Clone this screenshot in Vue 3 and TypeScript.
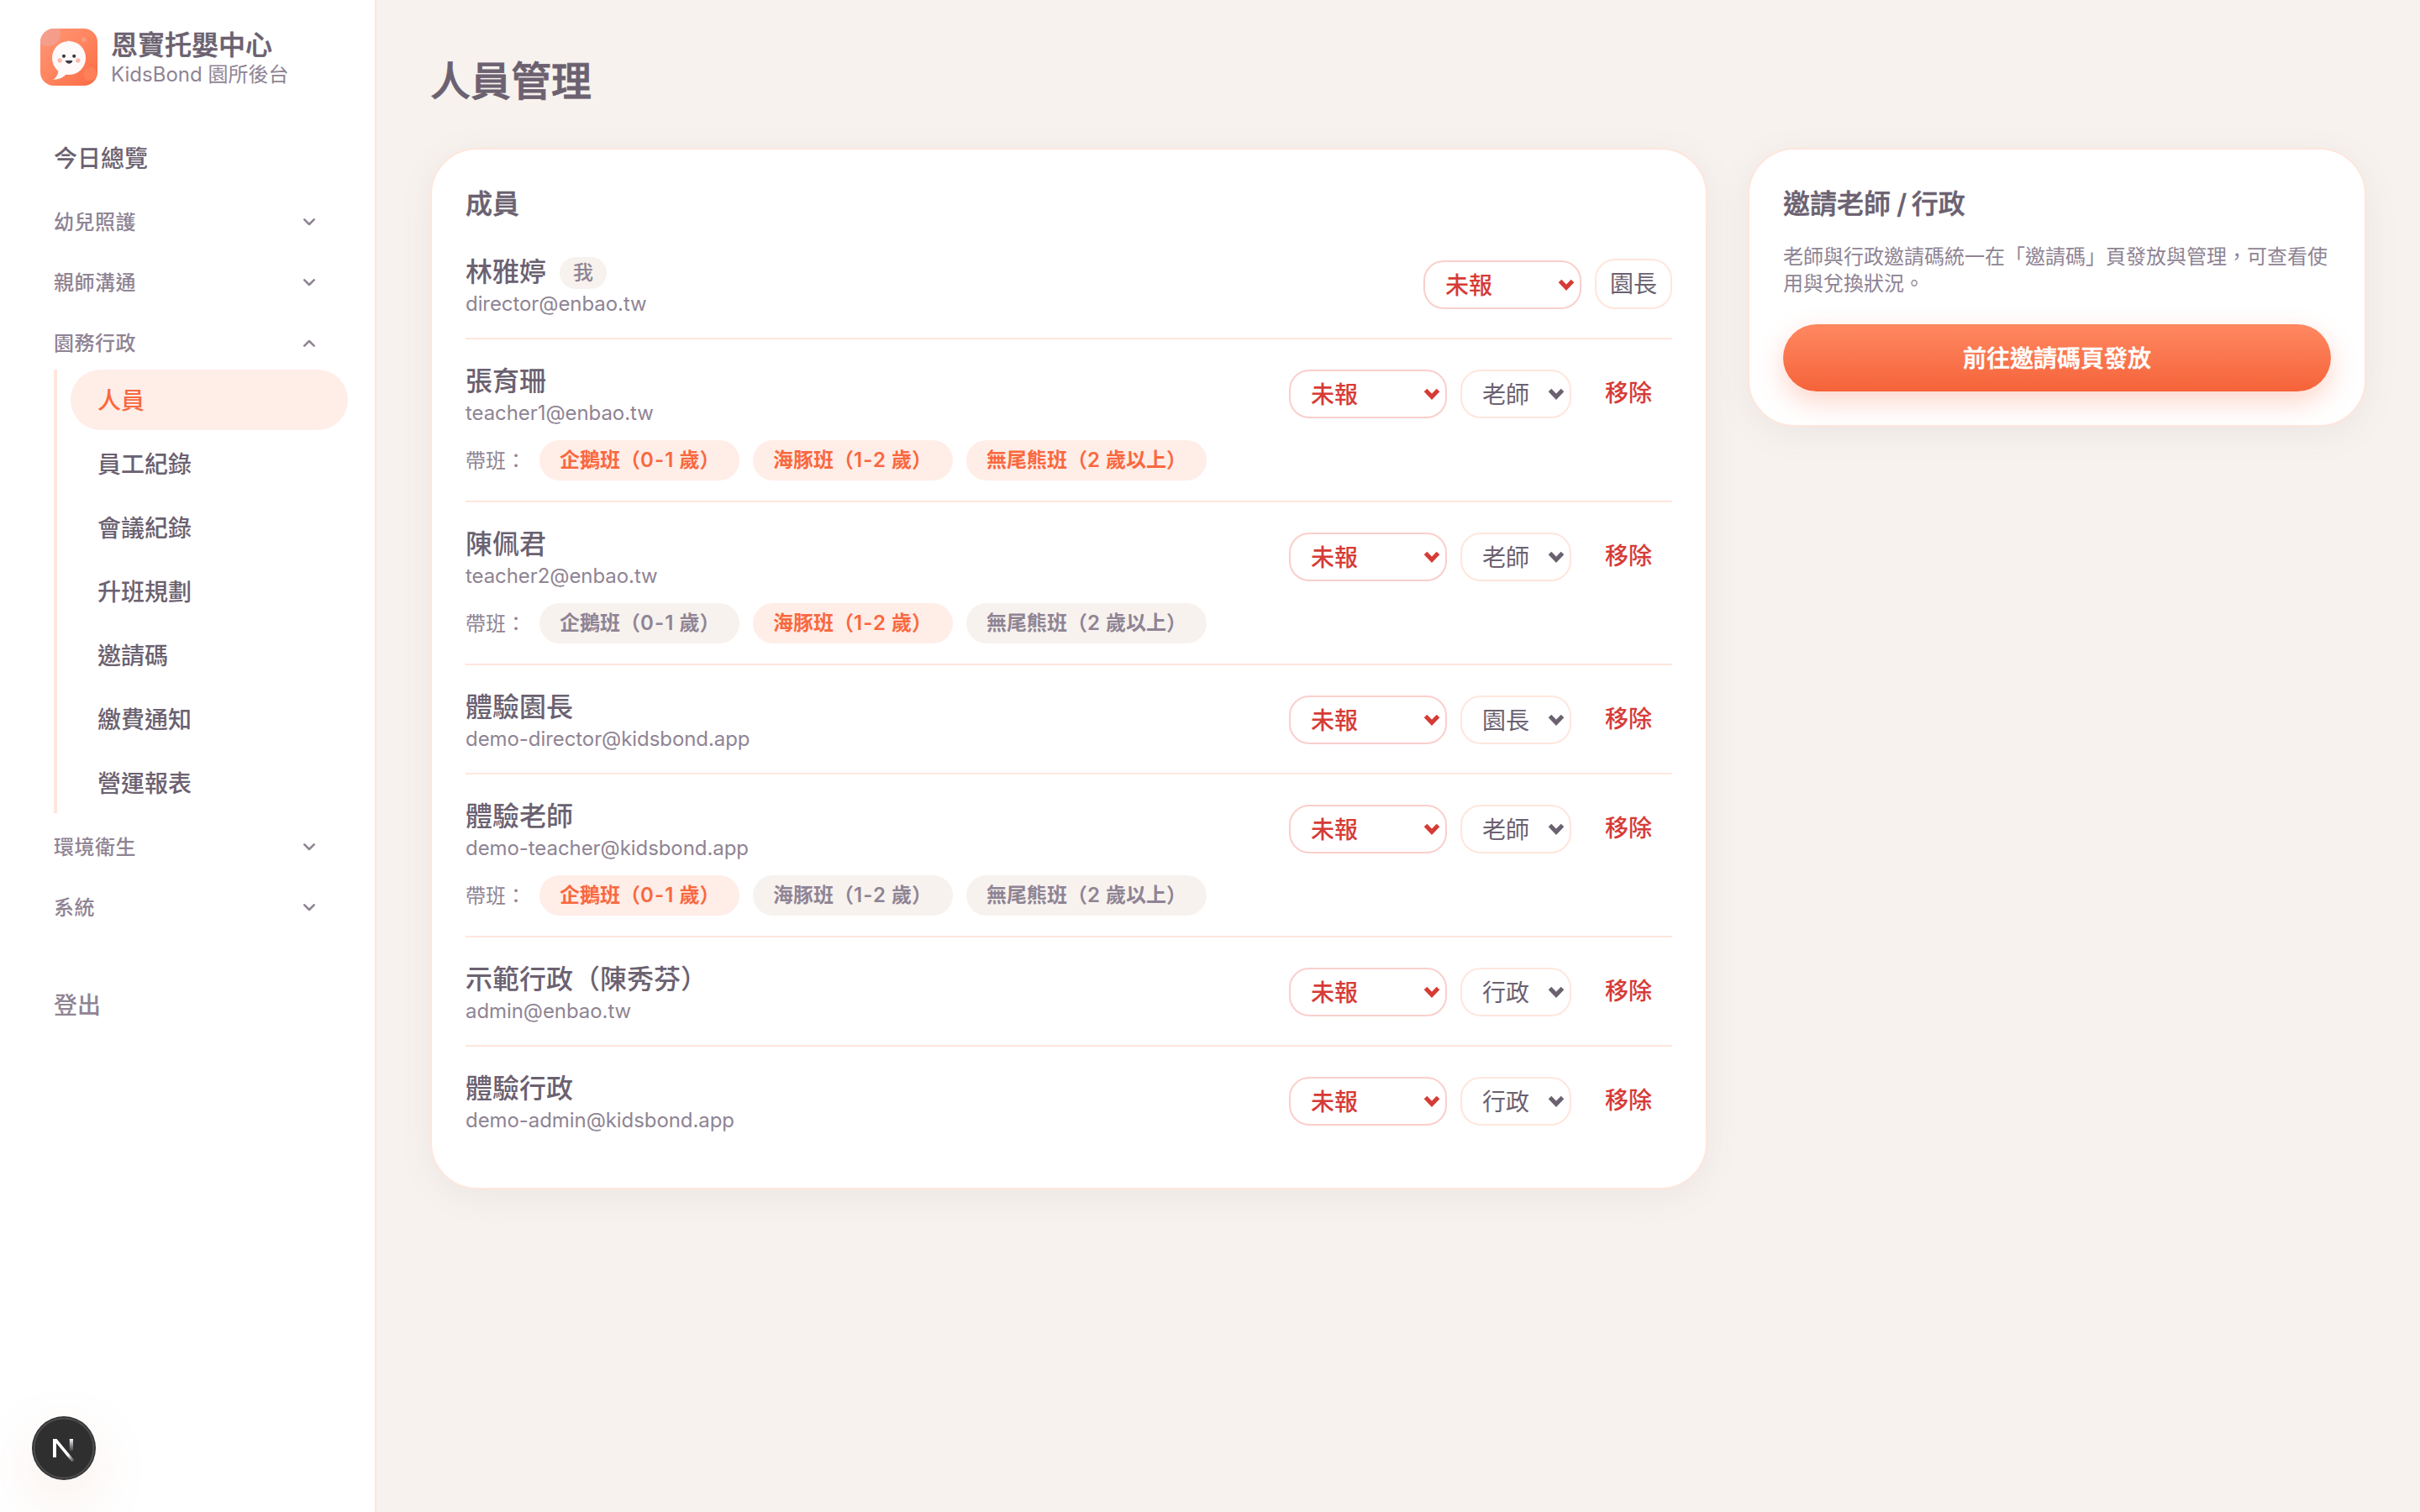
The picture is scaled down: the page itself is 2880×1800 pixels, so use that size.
<script setup lang="ts">
import { ref } from 'vue'

interface NavGroup {
  label: string
  open: boolean
  items: string[]
}

interface ClassRoom {
  name: string
  age: string
  unit: string
}

interface ClassChip extends ClassRoom {
  on: boolean
}

interface Member {
  name: string
  email: string
  role: string
  self?: boolean
  classes?: ClassChip[]
}

const groups = ref<NavGroup[]>([
  { label: '幼兒照護', open: false, items: [] },
  { label: '親師溝通', open: false, items: [] },
  {
    label: '園務行政',
    open: true,
    items: ['人員', '員工紀錄', '會議紀錄', '升班規劃', '邀請碼', '繳費通知', '營運報表'],
  },
  { label: '環境衛生', open: false, items: [] },
  { label: '系統', open: false, items: [] },
])

const activeItem = ref('人員')

const rooms: ClassRoom[] = [
  { name: '企鵝班', age: '0-1', unit: '歲' },
  { name: '海豚班', age: '1-2', unit: '歲' },
  { name: '無尾熊班', age: '2', unit: '歲以上' },
]
const chips = (...on: boolean[]): ClassChip[] => rooms.map((room, i) => ({ ...room, on: on[i] }))

const members: Member[] = [
  { name: '林雅婷', email: 'director@enbao.tw', role: '園長', self: true },
  { name: '張育珊', email: 'teacher1@enbao.tw', role: '老師', classes: chips(true, true, true) },
  { name: '陳佩君', email: 'teacher2@enbao.tw', role: '老師', classes: chips(false, true, false) },
  { name: '體驗園長', email: 'demo-director@kidsbond.app', role: '園長' },
  { name: '體驗老師', email: 'demo-teacher@kidsbond.app', role: '老師', classes: chips(true, false, false) },
  { name: '示範行政（陳秀芬）', email: 'admin@enbao.tw', role: '行政' },
  { name: '體驗行政', email: 'demo-admin@kidsbond.app', role: '行政' },
]
</script>

<template>
  <div class="shell">
    <aside class="sidebar">
      <div class="brand">
        <svg class="brand-logo" viewBox="0 0 68 68" aria-hidden="true">
          <defs>
            <linearGradient id="logo-bg" x1="0" y1="0" x2="1" y2="1">
              <stop offset="0" stop-color="#ff9677" />
              <stop offset="0.5" stop-color="#ff855f" />
              <stop offset="1" stop-color="#f96a43" />
            </linearGradient>
            <clipPath id="logo-clip"><rect width="68" height="68" rx="16" /></clipPath>
          </defs>
          <g clip-path="url(#logo-clip)">
            <rect width="68" height="68" fill="url(#logo-bg)" />
            <circle cx="9" cy="6" r="15" fill="#f0a294" opacity="0.75" />
            <circle cx="59" cy="54" r="8" fill="#ff8058" />
            <path d="M51 9.500l1.600 1.800 2.400.2-1 2.100.6 2.200-2.400-.5-2.200 1-.3-2.400-1.400-1.800 2.200-.7z" fill="#f79d82" />
            <circle cx="34" cy="35" r="20" fill="#fefaf9" />
            <path d="M21.500 49c.2 5-2.500 9-6.200 11.800C22.500 60.500 28.500 58 31.500 53z" fill="#fefaf9" />
            <path d="M30.500 15.800l2 .8.9-2.900 1.600 2.700 2.500-1.200-.8 2.300h-5.500z" fill="#fefaf9" />
            <circle cx="28" cy="32.800" r="2.100" fill="#3c3b41" />
            <circle cx="40.200" cy="32.800" r="2.100" fill="#3c3b41" />
            <path d="M30 37.900h8.400c-.5 5-7.900 5-8.400 0z" fill="#3c3b41" />
            <circle cx="23.200" cy="38" r="2.700" fill="#fcb9ad" />
            <circle cx="44.800" cy="38" r="2.700" fill="#fcb9ad" />
          </g>
        </svg>
        <div class="brand-text">
          <strong class="brand-name">恩寶托嬰中心</strong>
          <span class="brand-sub">KidsBond 園所後台</span>
        </div>
      </div>

      <nav class="nav">
        <a class="nav-link">今日總覽</a>
        <div v-for="g in groups" :key="g.label">
          <button class="nav-group" type="button" @click="g.open = !g.open">
            <span class="nav-group-label">{{ g.label }}</span>
            <svg class="chevron" :class="{ open: g.open }" viewBox="0 0 14 9" aria-hidden="true">
              <path d="M1.300 1.400L7 7l5.700-5.600" />
            </svg>
          </button>
          <div v-if="g.open && g.items.length" class="subnav">
            <a
              v-for="item in g.items"
              :key="item"
              class="subnav-link"
              :class="{ active: item === activeItem }"
              @click="activeItem = item"
            >{{ item }}</a>
          </div>
        </div>
      </nav>

      <a class="logout">登出</a>
    </aside>

    <main class="main">
      <h1 class="page-title">人員管理</h1>
      <div class="columns">
        <section class="card">
          <h2 class="card-title">成員</h2>
          <ul class="members">
            <li v-for="m in members" :key="m.email" class="member">
              <div class="member-top">
                <div class="member-info">
                  <div class="member-name">
                    <span class="member-name-text">{{ m.name }}</span>
                    <span v-if="m.self" class="self-badge">我</span>
                  </div>
                  <div class="member-email">{{ m.email }}</div>
                </div>
                <div class="controls">
                  <div class="select report">
                    <span>未報</span>
                    <svg class="caret" viewBox="0 0 20 14" aria-hidden="true"><path d="M2.500 2.500l7.500 7.800 7.500-7.800" /></svg>
                  </div>
                  <span v-if="m.self" class="role-fixed">{{ m.role }}</span>
                  <template v-else>
                    <div class="select role">
                      <span>{{ m.role }}</span>
                      <svg class="caret" viewBox="0 0 20 14" aria-hidden="true"><path d="M2.500 2.500l7.500 7.800 7.500-7.800" /></svg>
                    </div>
                    <button class="remove" type="button">移除</button>
                  </template>
                </div>
              </div>
              <div v-if="m.classes" class="class-row">
                <span class="class-label">帶班：</span>
                <span
                  v-for="(c, i) in m.classes"
                  :key="c.name"
                  class="chip"
                  :class="{ on: c.on, wide: i === 2 }"
                >{{ c.name }}（<span class="age">{{ c.age }}</span> {{ c.unit }}）</span>
              </div>
            </li>
          </ul>
        </section>

        <section class="card invite">
          <h2 class="card-title">邀請老師<span class="slash"> / </span>行政</h2>
          <p class="invite-text">老師與行政邀請碼統一在「邀請碼」頁發放與管理，可查看使用與兌換狀況。</p>
          <button class="invite-button" type="button">前往邀請碼頁發放</button>
        </section>
      </div>
    </main>

    <div class="dev-badge">
      <svg viewBox="0 0 76 76" aria-hidden="true">
        <defs>
          <linearGradient id="n-diag" gradientUnits="userSpaceOnUse" x1="37" y1="41" x2="48" y2="56">
            <stop offset="0" stop-color="#fff" />
            <stop offset="0.4" stop-color="#fff" />
            <stop offset="1" stop-color="#d8cfe0" stop-opacity="0.1" />
          </linearGradient>
          <linearGradient id="n-stem" x1="0" y1="0" x2="0" y2="1">
            <stop offset="0" stop-color="#fff" />
            <stop offset="1" stop-color="#d8cfe0" stop-opacity="0.15" />
          </linearGradient>
        </defs>
        <circle cx="38" cy="38" r="35.5" fill="none" stroke="#4d4d4d" stroke-width="2" />
        <path d="M25 49V27h4.500L50.500 52.500 47.500 54.500 29 32v17z" fill="url(#n-diag)" />
        <rect x="44.800" y="27" width="4.200" height="14" fill="url(#n-stem)" />
      </svg>
    </div>
  </div>
</template>

<style>
body {
  background: #f7f2ee;
}
</style>

<style scoped>
.shell {
  position: relative;
  display: flex;
  width: 2880px;
  height: 1800px;
  overflow: hidden;
  background: #f7f2ee;
  color: #6b6170;
  font-family: Inter, "Noto Sans CJK TC", sans-serif;
  font-size: 28px;
}

.shell *,
.shell {
  box-sizing: border-box;
}

button {
  border: 0;
  background: none;
  font: inherit;
  color: inherit;
}

/* Sidebar */
.sidebar {
  flex: none;
  width: 448px;
  padding: 32px 32px 0;
  background: #fff;
  border-right: 2px solid #ffe6dc;
}

.brand {
  display: flex;
  align-items: center;
  gap: 16px;
  height: 72px;
  padding-left: 16px;
}

.brand-logo {
  flex: none;
  width: 68px;
  height: 68px;
}

.brand-text {
  display: flex;
  flex-direction: column;
  padding-top: 3px;
  white-space: nowrap;
}

.brand-name {
  font-size: 32px;
  font-weight: 500;
  line-height: 38px;
  -webkit-text-stroke: 0.5px currentColor;
}

.brand-sub {
  font-size: 24px;
  line-height: 32px;
  color: #8f8494;
}

.nav {
  display: flex;
  flex-direction: column;
  gap: 8px;
  margin-top: 48px;
}

.nav-link,
.logout {
  display: flex;
  align-items: center;
  height: 72px;
  padding: 0 32px 3px;
  font-weight: 500;
}

.nav-group {
  display: flex;
  align-items: center;
  justify-content: space-between;
  width: 100%;
  height: 64px;
  padding: 0 39px 0 32px;
  font-size: 24px;
  font-weight: 500;
  letter-spacing: 0.5px;
  color: #8f8494;
}

.nav-group-label {
  padding-bottom: 4px;
}

.chevron {
  width: 14px;
  height: 9px;
  fill: none;
  stroke: currentColor;
  stroke-width: 2.6;
  stroke-linecap: round;
  stroke-linejoin: round;
}

.chevron.open {
  transform: rotate(180deg);
}

.subnav {
  display: flex;
  flex-direction: column;
  gap: 4px;
  margin-left: 32px;
  padding-left: 16px;
  border-left: 4px solid #ffe6dc;
}

.subnav-link {
  display: flex;
  align-items: center;
  height: 72px;
  padding: 0 32px 3px;
  border-radius: 36px;
  font-weight: 500;
}

.subnav-link.active {
  background: #ffede7;
  color: #f9683f;
}

.logout {
  margin-top: 48px;
  color: #8f8494;
}

/* Main column */
.main {
  flex: 1;
  padding: 64px;
}

.page-title {
  margin: 0 0 48px;
  padding-top: 2px;
  font-size: 48px;
  font-weight: 500;
  line-height: 62px;
  -webkit-text-stroke: 0.8px currentColor;
}

.columns {
  display: grid;
  grid-template-columns: 1520px 736px;
  gap: 48px;
  align-items: start;
}

.card {
  padding: 40px;
  background: #fff;
  border: 2px solid #ffe6dc;
  border-radius: 56px;
  box-shadow: 0 8px 40px rgba(107, 97, 112, 0.08);
}

.card-title {
  margin: 0;
  padding-top: 2px;
  font-size: 32px;
  font-weight: 500;
  line-height: 46px;
  -webkit-text-stroke: 0.5px currentColor;
}

.slash {
  letter-spacing: -1.4px;
}

.members {
  margin: 8px 0 0;
  padding: 0;
  list-style: none;
}

.member {
  padding: 24px 0;
  border-bottom: 2px solid #ffe6dc;
}

.member:last-child {
  border-bottom: 0;
}

.member-top {
  display: flex;
  align-items: center;
  justify-content: space-between;
  height: 80px;
}

.member-name {
  display: flex;
  align-items: center;
  gap: 16px;
  height: 48px;
  font-size: 32px;
  font-weight: 500;
}

.member-name-text {
  padding-top: 3px;
  line-height: 45px;
}

.self-badge {
  width: 56px;
  height: 38px;
  margin-top: 6px;
  border-radius: 19px;
  background: #f7f2ee;
  font-size: 24px;
  line-height: 38px;
  text-align: center;
  color: #8f8494;
}

.member-email {
  font-size: 24px;
  line-height: 32px;
  letter-spacing: -0.07px;
  color: #8f8494;
}

.controls {
  display: flex;
  align-items: center;
  gap: 16px;
}

.select {
  display: flex;
  align-items: center;
  justify-content: space-between;
  height: 58px;
  margin-top: 2px;
  padding: 0 6px 0 24px;
  border: 2px solid #ffe6dc;
  border-radius: 24px;
}

.select span {
  padding-top: 2px;
  line-height: 52px;
}

.select.report {
  width: 188px;
  border-color: #facfcb;
  color: #d63b36;
  font-weight: 500;
}

.select.role {
  width: 132px;
}

.caret {
  width: 20px;
  height: 14px;
  fill: none;
  stroke: currentColor;
  stroke-width: 5;
}

.role-fixed {
  width: 92px;
  height: 60px;
  border: 2px solid #ffe6dc;
  border-radius: 24px;
  line-height: 56px;
  text-align: center;
}

.remove {
  padding: 0 24px;
  line-height: 56px;
  font-weight: 500;
  color: #d63b36;
}

.class-row {
  display: flex;
  align-items: center;
  gap: 16px;
  margin-top: 16px;
  font-size: 24px;
}

.class-label {
  width: 72px;
  padding-bottom: 3px;
  color: #8f8494;
  white-space: nowrap;
}

.chip {
  width: 238px;
  height: 48px;
  padding-left: 24px;
  border-radius: 24px;
  background: #f7f2ee;
  color: #8f8494;
  font-weight: 600;
  line-height: 48px;
  white-space: nowrap;
}

.age {
  letter-spacing: 1.1px;
}

.chip.wide {
  width: 286px;
}

.chip.on {
  background: #ffede7;
  color: #f9683f;
}

.invite-text {
  margin: 24px 0 32px;
  font-size: 24px;
  line-height: 32px;
  color: #8f8494;
}

.invite-button {
  display: block;
  width: 100%;
  height: 80px;
  padding: 0 0 2px;
  border-radius: 40px;
  background: linear-gradient(180deg, #ff8861 0%, #f5633a 100%);
  box-shadow: 0 12px 32px rgba(249, 104, 63, 0.28);
  color: #fff;
  font-weight: 500;
  -webkit-text-stroke: 0.5px currentColor;
}

/* Floating dev indicator */
.dev-badge {
  position: absolute;
  left: 38px;
  top: 1686px;
  width: 76px;
  height: 76px;
  border-radius: 50%;
  background: #2f2f2f;
  box-shadow: 0 24px 64px rgba(220, 150, 120, 0.17);
}

.dev-badge svg {
  display: block;
  width: 76px;
  height: 76px;
}
</style>
